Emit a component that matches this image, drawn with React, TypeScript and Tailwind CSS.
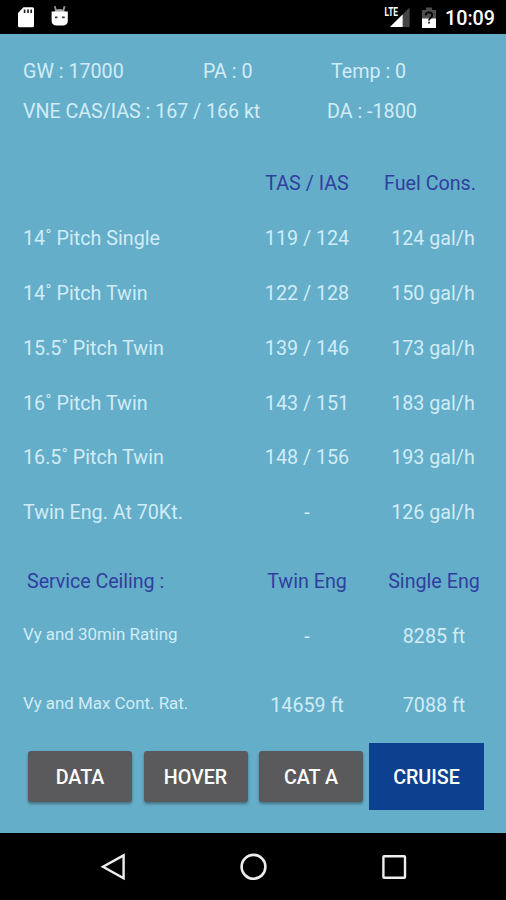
const pitchRows = [
  { label: "14˚ Pitch Single", speed: "119 / 124", fuel: "124 gal/h" },
  { label: "14˚ Pitch Twin", speed: "122 / 128", fuel: "150 gal/h" },
  { label: "15.5˚ Pitch Twin", speed: "139 / 146", fuel: "173 gal/h" },
  { label: "16˚ Pitch Twin", speed: "143 / 151", fuel: "183 gal/h" },
  { label: "16.5˚ Pitch Twin", speed: "148 / 156", fuel: "193 gal/h" },
  { label: "Twin Eng. At 70Kt.", speed: "-", fuel: "126 gal/h" },
];

const tabs = ["DATA", "HOVER", "CAT A"];

function StatusBar() {
  return (
    <header className="flex h-[34px] items-center bg-black text-white">
      <svg className="ml-[17px]" width="18" height="22" viewBox="0 0 18 22">
        <path
          d="M6.5 1.2H15.5Q17 1.2 17 2.7V19.8Q17 21.3 15.5 21.3H2.5Q1 21.3 1 19.8V7Z"
          fill="#fff"
        />
        <path d="M7.6 3.4V7M11 3.4V7M14.2 3.4V7" stroke="#222" strokeWidth="1.7" />
      </svg>
      <svg className="ml-[15px]" width="20" height="22" viewBox="0 0 20 22">
        <path d="M4.8 0.2L6.2 5M14.6 0.2L13.2 5" stroke="#999" strokeWidth="1.8" />
        <path d="M4 6.5Q5.2 3 9.7 3T15.4 6.5Z" fill="#a8a8a8" />
        <path d="M1.6 5.6H17.8V14.5Q17.8 19.6 12.5 19.6H6.9Q1.6 19.6 1.6 14.5Z" fill="#fff" />
        <path d="M4.9 11.4H7.5M12.1 11.4H14.7" stroke="#333" strokeWidth="1.7" />
      </svg>
      <div className="ml-auto flex items-center">
        <svg width="28" height="24" viewBox="0 0 28 24">
          <path d="M25.6 2.4V22H6Z" fill="#444" />
          <path d="M18.6 9.4V22H6Z" fill="#fff" />
          <path d="M0 0H14.4V11.5H0Z" fill="#000" />
          <text
            x="0.6"
            y="11"
            fill="#fff"
            fontFamily="Roboto, sans-serif"
            fontSize="12"
            fontWeight="700"
            textLength="13.4"
            lengthAdjust="spacingAndGlyphs"
          >
            LTE
          </text>
        </svg>
        <svg className="ml-[9.5px] mt-px" width="14" height="22" viewBox="0 0 14 22">
          <path d="M4 0.5H10V3H14V21H0V3H4Z" fill="#4d4d4d" />
          <path d="M0 11.5H14V21H0Z" fill="#fff" />
          <path
            d="M3.8 8.2Q3.8 5.4 7 5.4T10.2 8.2C10.2 10.8 7 11 7 13.6"
            fill="none"
            stroke="#000"
            strokeWidth="1.9"
          />
          <path d="M6 14.8H8V16.4H6Z" fill="#333" />
        </svg>
        <span className="ml-[9.5px] mr-[11px] mt-[4px] text-[19.7px] leading-none font-medium">
          10:09
        </span>
      </div>
    </header>
  );
}

function Row({
  label,
  speed,
  fuel,
  className,
  labelClass = "",
  fuelClass = "",
}: {
  label: string;
  speed: string;
  fuel: string;
  className: string;
  labelClass?: string;
  fuelClass?: string;
}) {
  return (
    <div className={`grid grid-cols-[221px_126px_126px] items-center ${className}`}>
      <span className={labelClass}>{label}</span>
      <span className="text-center">{speed}</span>
      <span className={`text-center ${fuelClass}`}>{fuel}</span>
    </div>
  );
}

function NavBar() {
  return (
    <nav className="flex h-[67px] items-center justify-between bg-black pl-[99px] pr-[98px]">
      <svg width="28" height="30" viewBox="0 0 28 30" fill="none" stroke="#eee" strokeWidth="2.4">
        <path d="M24.6 3.4V26.2L4 14.8Z" />
      </svg>
      <svg width="30" height="30" viewBox="0 0 30 30" fill="none" stroke="#eee" strokeWidth="2.6">
        <circle cx="14.5" cy="14.8" r="11.9" />
      </svg>
      <svg width="28" height="28" viewBox="0 0 28 28" fill="none" stroke="#eee" strokeWidth="2.4">
        <rect x="3.4" y="3.2" width="21.6" height="21.6" rx="0.8" />
      </svg>
    </nav>
  );
}

export default function App() {
  return (
    <div className="flex h-[900px] w-[506px] flex-col overflow-hidden bg-black font-[Roboto,sans-serif]">
      <StatusBar />

      <main className="flex h-[799px] flex-col bg-[#65aec9] pl-[23px] text-[19.7px] leading-6 whitespace-nowrap text-[#d0ecf7]">
        <div className="mt-[26px] grid grid-cols-[180px_128px_1fr]">
          <span>GW : 17000</span>
          <span>PA : 0</span>
          <span>Temp : 0</span>
        </div>
        <div className="mt-[15.5px] grid grid-cols-[304px_1fr]">
          <span className="tracking-[-0.04px]">VNE CAS/IAS : 167 / 166 kt</span>
          <span>DA : -1800</span>
        </div>

        <Row
          label=""
          speed="TAS / IAS"
          fuel="Fuel Cons."
          className="mt-[33.6px] h-[54.8px] text-[#303f9f]"
          fuelClass="pr-[6px]"
        />
        {pitchRows.map((row) => (
          <Row key={row.label} {...row} className="h-[54.8px]" />
        ))}
        <Row
          label="Service Ceiling :"
          speed="Twin Eng"
          fuel="Single Eng"
          className="mt-[14px] h-[55px] text-[#303f9f]"
          labelClass="pl-1 tracking-[-0.06px]"
          fuelClass="pl-[2px]"
        />
        <Row
          label="Vy and 30min Rating"
          speed="-"
          fuel="8285 ft"
          className="h-[55px]"
          labelClass="text-[16.9px] -mt-[6px]"
          fuelClass="pl-[2px]"
        />
        <Row
          label="Vy and Max Cont. Rat."
          speed="14659 ft"
          fuel="7088 ft"
          className="mt-[14px] h-[55px]"
          labelClass="text-[16.9px] -mt-[6px]"
          fuelClass="pl-[2px]"
        />

        <div className="mt-[9.5px] flex items-center pl-[5px] font-medium text-white">
          {tabs.map((tab) => (
            <button
              key={tab}
              className="mr-[11.5px] h-[51px] w-[104px] rounded-[3px] bg-[#5a595b] pt-[3px] shadow-[0_2px_3px_rgba(0,0,0,0.35)] nth-[3]:mr-[6px]"
            >
              {tab}
            </button>
          ))}
          <button className="h-[67px] w-[115px] bg-[#0b418e] pt-[3px]">CRUISE</button>
        </div>
      </main>

      <NavBar />
    </div>
  );
}
